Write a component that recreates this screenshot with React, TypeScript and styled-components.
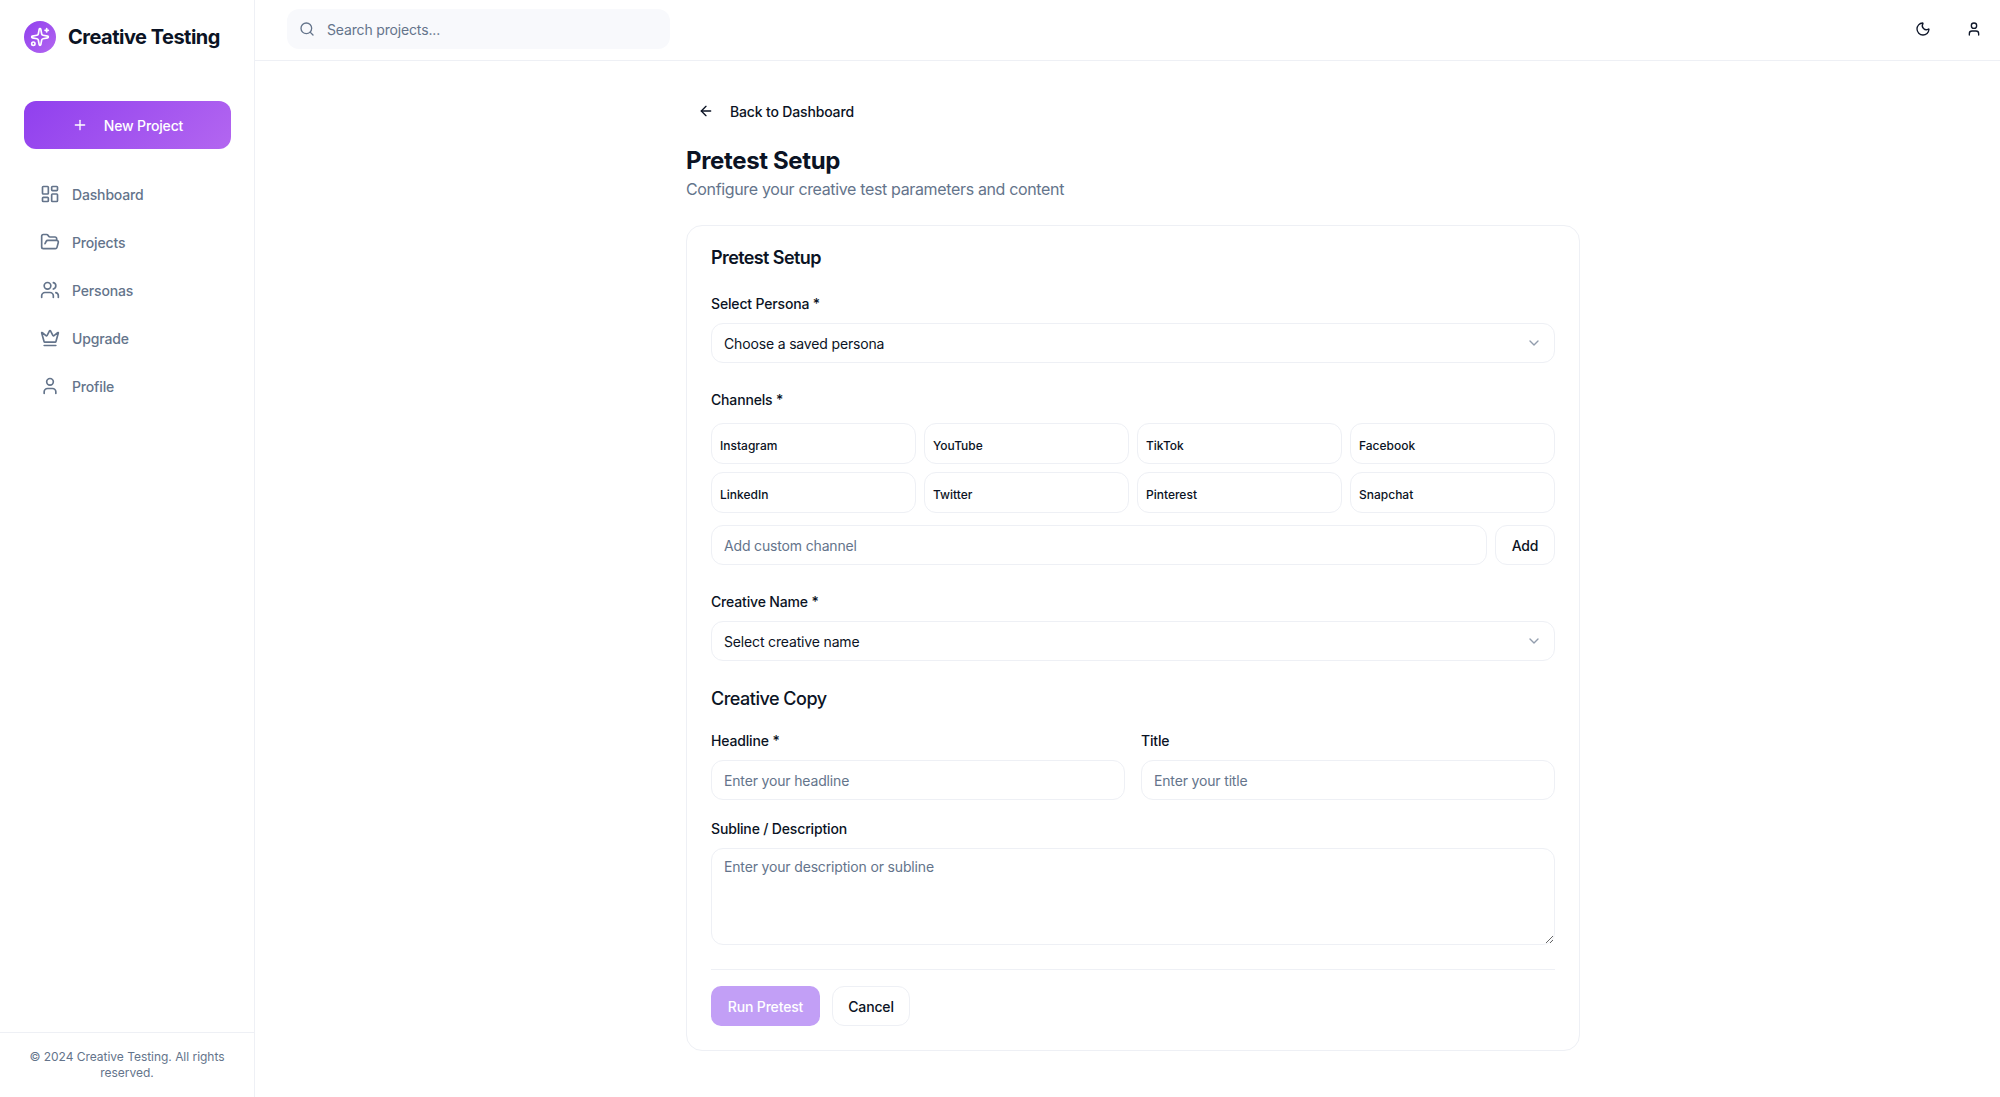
import styled, { createGlobalStyle } from "styled-components";
import {
  ArrowLeft,
  ChevronDown,
  Crown,
  FolderOpen,
  LayoutDashboard,
  Moon,
  Plus,
  Search,
  Sparkles,
  User,
  Users,
} from "lucide-react";

const GlobalStyle = createGlobalStyle`
  * {
    box-sizing: border-box;
  }

  body {
    margin: 0;
    background: #ffffff;
    color: #0b1324;
    font-family: Inter, "Liberation Sans", sans-serif;
    letter-spacing: -0.16px;
  }

  input, textarea, button {
    letter-spacing: inherit;
  }
`;

const borderColor = "#eef0f5";

const Layout = styled.div`
  display: flex;
  height: 100vh;
  overflow: hidden;
`;

// sidebar
const Sidebar = styled.aside`
  display: flex;
  flex-direction: column;
  flex: 0 0 255px;
  border-right: 1px solid ${borderColor};
`;

const Brand = styled.div`
  display: flex;
  align-items: center;
  gap: 12px;
  padding: 21px 24px 0;
`;

const BrandMark = styled.div`
  display: flex;
  align-items: center;
  justify-content: center;
  width: 32px;
  height: 32px;
  border-radius: 50%;
  color: #ffffff;
  background: linear-gradient(135deg, #9040ee, #b366f0);
`;

const BrandName = styled.span`
  padding-top: 1px;
  font-size: 20px;
  line-height: 31px;
  font-weight: 700;
  letter-spacing: -0.5px;
`;

const NewProject = styled.button`
  display: flex;
  align-items: center;
  justify-content: center;
  gap: 16px;
  height: 48px;
  margin: 48px 23px 0 24px;
  border: 0;
  border-radius: 12px;
  color: #ffffff;
  background: linear-gradient(135deg, #9040ee, #b366f0);
  font: 500 14px Inter, sans-serif;
`;

const Nav = styled.nav`
  display: flex;
  flex-direction: column;
  flex: 1;
  padding: 21px 24px 0;
`;

const NavItem = styled.a`
  display: flex;
  align-items: center;
  gap: 12px;
  height: 48px;
  padding-left: 16px;
  color: #64748b;
  font-size: 14px;
  font-weight: 500;
`;

const SidebarFooter = styled.footer`
  padding: 16px 24px;
  border-top: 1px solid ${borderColor};
  color: #64748b;
  font-size: 12px;
  line-height: 16px;
  letter-spacing: -0.03px;
  text-align: center;
`;

// top bar and main column
const Column = styled.div`
  display: flex;
  flex-direction: column;
  flex: 1;
  min-width: 0;
`;

const TopBar = styled.header`
  display: flex;
  align-items: center;
  justify-content: space-between;
  flex: 0 0 61px;
  padding: 0 18px 2px 32px;
  border-bottom: 1px solid ${borderColor};
`;

const SearchBox = styled.div`
  display: flex;
  align-items: center;
  gap: 12px;
  width: 383px;
  height: 40px;
  padding-left: 12px;
  border-radius: 12px;
  color: #64748b;
  background: #f8f9fc;
  font-size: 14px;
`;

const TopActions = styled.div`
  display: flex;
  gap: 35px;
  color: #0f172a;
`;

const Main = styled.main`
  flex: 1;
  padding: 38px 0 0 11px;
`;

const Content = styled.div`
  width: 894px;
  margin: 0 auto;
`;

const BackLink = styled.a`
  display: flex;
  align-items: center;
  gap: 16px;
  height: 24px;
  padding-left: 12px;
  font-size: 14px;
  font-weight: 500;
`;

const PageTitle = styled.h1`
  margin: 22px 0 0;
  font-size: 24px;
  line-height: 32px;
  font-weight: 700;
  letter-spacing: -0.35px;
`;

const PageSubtitle = styled.p`
  margin: 0;
  color: #64748b;
  font-size: 16px;
  line-height: 24px;
  letter-spacing: -0.35px;
`;

// form card
const Card = styled.section`
  margin-top: 24px;
  padding: 24px;
  border: 1px solid ${borderColor};
  border-radius: 16px;
`;

const CardTitle = styled.h2`
  margin: 0;
  font-size: 18px;
  line-height: 16px;
  font-weight: 600;
  letter-spacing: -0.6px;
`;

const Field = styled.div<{ $top: number }>`
  display: flex;
  flex-direction: column;
  min-width: 0;
  flex: 1;
  margin-top: ${(p) => p.$top}px;
`;

const Label = styled.label<{ $gap?: number }>`
  margin-bottom: ${(p) => p.$gap ?? 9}px;
  font-size: 14px;
  line-height: 20px;
  font-weight: 500;
`;

const SelectBox = styled.div`
  display: flex;
  align-items: center;
  justify-content: space-between;
  height: 40px;
  padding: 0 12px;
  border: 1px solid ${borderColor};
  border-radius: 12px;
  font-size: 14px;
  color: #64748b;

  svg {
    opacity: 0.7;
  }
`;

const SelectValue = styled.span`
  color: #0b1324;
`;

const ChannelGrid = styled.div`
  display: grid;
  grid-template-columns: repeat(4, 1fr);
  gap: 8px;
`;

const Channel = styled.div`
  display: flex;
  align-items: center;
  height: 41px;
  padding: 3px 8px 0;
  border: 1px solid ${borderColor};
  border-radius: 12px;
  font-size: 12px;
  font-weight: 500;
  letter-spacing: 0;
`;

const CustomRow = styled.div`
  display: flex;
  gap: 8px;
  margin-top: 12px;
`;

const TextInput = styled.input`
  width: 100%;
  min-width: 0;
  height: 40px;
  padding: 0 12px;
  border: 1px solid ${borderColor};
  border-radius: 12px;
  outline: none;
  font: 14px Inter, sans-serif;

  &::placeholder {
    color: #64748b;
  }
`;

const AddButton = styled.button`
  flex: 0 0 60px;
  height: 40px;
  padding: 0;
  border: 1px solid ${borderColor};
  border-radius: 12px;
  color: #0b1324;
  background: #ffffff;
  font: 500 14px Inter, sans-serif;
`;

const SectionTitle = styled.h3`
  margin: 28px 0 0;
  font-size: 18px;
  line-height: 20px;
  font-weight: 500;
  letter-spacing: -0.5px;
`;

const TwoColumns = styled.div`
  display: flex;
  gap: 16px;
`;

const TextArea = styled.textarea`
  height: 97px;
  padding: 8px 12px;
  border: 1px solid ${borderColor};
  border-radius: 12px;
  outline: none;
  font: 14px/20px Inter, sans-serif;

  &::placeholder {
    color: #64748b;
  }
`;

const Actions = styled.div`
  display: flex;
  gap: 12px;
  margin-top: 24px;
  padding-top: 16px;
  border-top: 1px solid ${borderColor};
`;

const RunButton = styled.button`
  width: 109px;
  height: 40px;
  padding: 0;
  border: 0;
  border-radius: 10px;
  color: #ffffff;
  background: #c29ff6;
  font: 500 14px Inter, sans-serif;
`;

const CancelButton = styled.button`
  width: 78px;
  height: 40px;
  padding: 0;
  border: 1px solid ${borderColor};
  border-radius: 12px;
  color: #0b1324;
  background: #ffffff;
  font: 500 14px Inter, sans-serif;
`;

const navItems = [
  { label: "Dashboard", Icon: LayoutDashboard },
  { label: "Projects", Icon: FolderOpen },
  { label: "Personas", Icon: Users },
  { label: "Upgrade", Icon: Crown },
  { label: "Profile", Icon: User },
];

const channels = [
  "Instagram",
  "YouTube",
  "TikTok",
  "Facebook",
  "LinkedIn",
  "Twitter",
  "Pinterest",
  "Snapchat",
];

export default function App() {
  return (
    <>
      <GlobalStyle />
      <Layout>
        <Sidebar>
          <Brand>
            <BrandMark>
              <Sparkles size={20} />
            </BrandMark>
            <BrandName>Creative Testing</BrandName>
          </Brand>
          <NewProject>
            <Plus size={16} />
            New Project
          </NewProject>
          <Nav>
            {navItems.map(({ label, Icon }) => (
              <NavItem key={label}>
                <Icon size={20} />
                {label}
              </NavItem>
            ))}
          </Nav>
          <SidebarFooter>© 2024 Creative Testing. All rights reserved.</SidebarFooter>
        </Sidebar>
        <Column>
          <TopBar>
            <SearchBox>
              <Search size={16} />
              Search projects...
            </SearchBox>
            <TopActions>
              <Moon size={16} />
              <User size={16} />
            </TopActions>
          </TopBar>
          <Main>
            <Content>
              <BackLink>
                <ArrowLeft size={16} />
                Back to Dashboard
              </BackLink>
              <PageTitle>Pretest Setup</PageTitle>
              <PageSubtitle>Configure your creative test parameters and content</PageSubtitle>
              <Card>
                <CardTitle>Pretest Setup</CardTitle>
                <Field $top={28}>
                  <Label>Select Persona *</Label>
                  <SelectBox>
                    <SelectValue>Choose a saved persona</SelectValue>
                    <ChevronDown size={16} />
                  </SelectBox>
                </Field>
                <Field $top={27}>
                  <Label $gap={13}>Channels *</Label>
                  <ChannelGrid>
                    {channels.map((name) => (
                      <Channel key={name}>{name}</Channel>
                    ))}
                  </ChannelGrid>
                  <CustomRow>
                    <TextInput placeholder="Add custom channel" />
                    <AddButton>Add</AddButton>
                  </CustomRow>
                </Field>
                <Field $top={27}>
                  <Label>Creative Name *</Label>
                  <SelectBox>
                    <SelectValue>Select creative name</SelectValue>
                    <ChevronDown size={16} />
                  </SelectBox>
                </Field>
                <SectionTitle>Creative Copy</SectionTitle>
                <TwoColumns>
                  <Field $top={22}>
                    <Label>Headline *</Label>
                    <TextInput placeholder="Enter your headline" />
                  </Field>
                  <Field $top={22}>
                    <Label>Title</Label>
                    <TextInput placeholder="Enter your title" />
                  </Field>
                </TwoColumns>
                <Field $top={19}>
                  <Label>Subline / Description</Label>
                  <TextArea placeholder="Enter your description or subline" />
                </Field>
                <Actions>
                  <RunButton>Run Pretest</RunButton>
                  <CancelButton>Cancel</CancelButton>
                </Actions>
              </Card>
            </Content>
          </Main>
        </Column>
      </Layout>
    </>
  );
}
